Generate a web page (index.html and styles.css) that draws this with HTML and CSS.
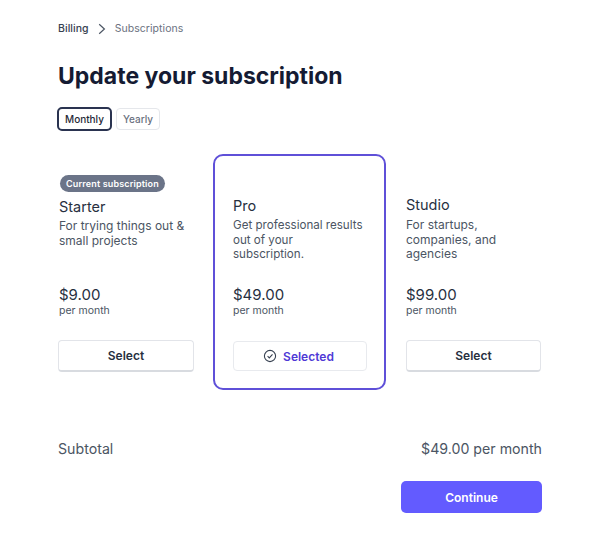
FILE: index.html
```html
<!DOCTYPE html>
<html lang="en">
<head>
<meta charset="utf-8">
<title>Update your subscription</title>
<link rel="stylesheet" href="styles.css">
</head>
<body>
<main class="page">
  <nav class="crumbs">
    <span class="crumb-parent">Billing</span>
    <svg class="crumb-sep" width="8" height="12" viewBox="0 0 8 12" fill="none"><path d="M1.2 1.2 6.4 6l-5.2 4.8" stroke="#4b5563" stroke-width="1.2"/></svg>
    <span class="crumb-current">Subscriptions</span>
  </nav>
  <h1 class="title">Update your subscription</h1>
  <div class="tabs">
    <button class="tab tab-active">Monthly</button>
    <button class="tab">Yearly</button>
  </div>
  <section class="plans">
    <article class="plan plan-first">
      <span class="badge">Current subscription</span>
      <h2 class="plan-name">Starter</h2>
      <p class="plan-desc">For trying things out &amp; small projects</p>
      <div class="price">$9.00</div>
      <div class="per">per month</div>
      <button class="select">Select</button>
    </article>
    <article class="plan plan-pro">
      <h2 class="plan-name">Pro</h2>
      <p class="plan-desc">Get professional results out of your subscription.</p>
      <div class="price">$49.00</div>
      <div class="per">per month</div>
      <button class="select select-on">
        <svg width="14" height="14" viewBox="0 0 14 14" fill="none"><circle cx="7" cy="7" r="5.6" stroke="#374151" stroke-width="1.1"/><path d="M4.6 7.2 6.3 8.9 9.5 5.4" stroke="#374151" stroke-width="1.1"/></svg>
        Selected
      </button>
    </article>
    <article class="plan plan-last">
      <h2 class="plan-name">Studio</h2>
      <p class="plan-desc">For startups, companies, and agencies</p>
      <div class="price">$99.00</div>
      <div class="per">per month</div>
      <button class="select">Select</button>
    </article>
  </section>
  <div class="subtotal">
    <span>Subtotal</span>
    <span>$49.00 per month</span>
  </div>
  <div class="actions">
    <button class="continue">Continue</button>
  </div>
</main>
</body>
</html>
```
FILE: styles.css
```css
* { box-sizing: border-box; }
html, body { margin: 0; background: #fff; }
body { font-family: Inter, "Liberation Sans", sans-serif; color: #1f2937; }
.page { width: 600px; height: 550px; padding: 21px 58px 0 58px; }
.crumbs { display: flex; align-items: center; height: 15px; font-size: 10.5px; letter-spacing: 0.05px; }
.crumb-parent { color: #374151; font-weight: 500; }
.crumb-sep { margin: 0 9px 0 9px; }
.crumb-current { color: #6b7280; }
.title { margin: 24px 0 0; font-size: 23px; line-height: 32px; font-weight: 700; color: #151b33; }
.tabs { display: flex; align-items: center; gap: 4px; margin-top: 15px; margin-left: -1px; }
.tab { font: 500 10px Inter, sans-serif; height: 22px; padding: 0 6px; background: #fff; border: 1px solid #e5e7eb; border-radius: 4px; color: #6b7280; }
.tab-active { height: 24px; padding: 0 6px; border: 2px solid #2a3350; border-radius: 5px; color: #1f2937; }
.plans { display: flex; margin-top: 23px; }
.plan { display: flex; flex-direction: column; width: 136px; }
.plan-first { padding-top: 21px; margin-right: 19px; }
.plan-last { width: 135px; padding-top: 42px; margin-left: 20px; }
.plan-pro { width: 173px; height: 236px; padding: 41px 17px 0 18px; border: 2px solid #5f50d8; border-radius: 10px; }
.badge { align-self: flex-start; margin: 0 0 6px 2px; padding: 0 6px; height: 17px; line-height: 17px; border-radius: 9px; background: #6b7488; color: #fff; font-size: 9px; font-weight: 600; letter-spacing: .15px; white-space: nowrap; }
.plan-name { margin: 0; font-size: 14.5px; line-height: 18px; font-weight: 400; color: #27303f; }
.plan-desc { margin: 3px 0 0; height: 44px; font-size: 12px; line-height: 14.5px; color: #4b5563; }
.plan-pro .plan-desc { height: 45px; font-size: 11.6px; }
.plan-last .plan-desc { margin-top: 4px; height: 45px; }
.price { margin-top: 23px; font-size: 15px; line-height: 18px; color: #27303f; }
.per { font-size: 10.5px; line-height: 14px; color: #4b5563; }
.plan-first .plan-name, .plan-first .plan-desc, .plan-first .price, .plan-first .per { padding-left: 1px; }
.select { display: flex; align-items: center; justify-content: center; gap: 6px; margin-top: 22px; width: 100%; height: 32px; background: #fff; border: 1px solid #e2e4e9; border-bottom: 2px solid #d8dbe0; border-radius: 4px; font: 600 12px Inter, sans-serif; color: #27303f; }
.select-on { height: 30px; margin-top: 23px; padding-right: 9px; border: 1px solid #e8eaee; color: #4f39d6; }
.subtotal { display: flex; justify-content: space-between; align-items: center; margin-top: 48px; height: 20px; font-size: 14.2px; color: #4b5563; }
.actions { display: flex; justify-content: flex-end; margin-top: 23px; }
.continue { width: 141px; height: 32px; border: 0; border-radius: 5px; background: #635bff; color: #fff; font: 600 12px Inter, sans-serif; }
```
